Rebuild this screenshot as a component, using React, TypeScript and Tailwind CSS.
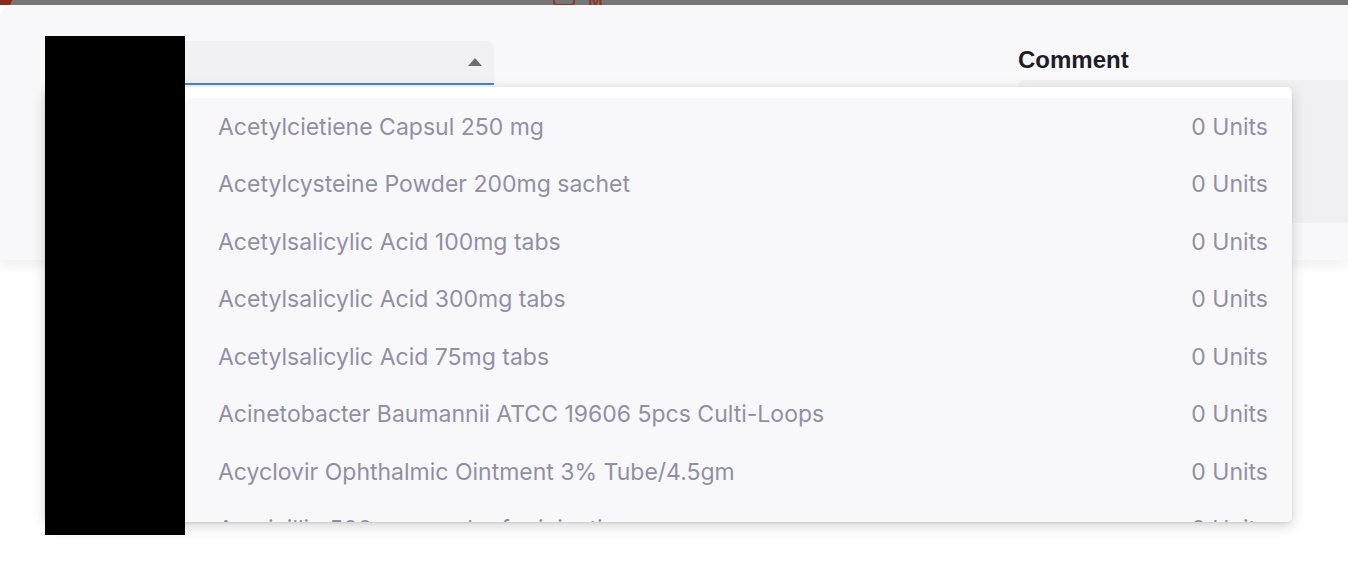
import React from 'react';

const items = [
  'Acetylcietiene Capsul 250 mg',
  'Acetylcysteine Powder 200mg sachet',
  'Acetylsalicylic Acid 100mg tabs',
  'Acetylsalicylic Acid 300mg tabs',
  'Acetylsalicylic Acid 75mg tabs',
  'Acinetobacter Baumannii ATCC 19606 5pcs Culti-Loops',
  'Acyclovir Ophthalmic Ointment 3% Tube/4.5gm',
  'Ampicillin 500mg powder for injection',
];

function Backdrop() {
  return (
    <div className="relative h-[5px] overflow-hidden bg-[#767676]">
      <div className="absolute left-[-6px] top-[-10px] h-[18px] w-[18px] rounded-full bg-[#8a2b1b]" />
      <div className="absolute left-[553px] top-[-12px] h-[18px] w-[22px] rounded-[4px] border-2 border-[#8a3a2c]" />
      <div className="absolute left-[588px] top-[-8px] font-['Liberation_Sans',sans-serif] text-[18px] font-bold leading-none text-[#8a3a2c]">M</div>
    </div>
  );
}

function Dropdown() {
  return (
    <div className="absolute left-[45px] top-[87px] h-[435px] w-[1247px] overflow-hidden rounded-[5px] bg-white pt-[11px] shadow-[0_4px_14px_rgba(0,0,0,0.16),0_1px_3px_rgba(0,0,0,0.1)]">
      <div className="h-full bg-[#f8f8fa]">
        {items.map((name) => (
          <div key={name} className="flex h-[57.5px] items-center justify-between pl-[173px] pr-[24px] font-['Inter',sans-serif] text-[23px] text-[#918fa5]">
            <span>{name}</span>
            <span>0 Units</span>
          </div>
        ))}
      </div>
    </div>
  );
}

export default function App() {
  return (
    <div className="relative h-[578px] w-[1348px] overflow-hidden bg-white">
      <Backdrop />
      <div className="flex h-[255px] rounded-tl-[14px] bg-[#f8f8fa] shadow-[0_6px_12px_rgba(0,0,0,0.06)]">
        <div className="w-[1018px] pl-[45px] pt-[36px]">
          <div className="flex h-[44px] w-[449px] items-center justify-end rounded-t-[8px] border-b-2 border-[#4a7fd6] bg-[#f1f1f3] pr-[11px]">
            <svg width="16" height="9" viewBox="0 0 16 9">
              <path d="M8 0 L15 8 L1 8 Z" fill="#6e6e6e" />
            </svg>
          </div>
        </div>
        <div className="flex flex-1 flex-col pt-[42px]">
          <div className="font-['Liberation_Sans',sans-serif] text-[24px] font-bold leading-[26px] text-[#1d1d28]">Comment</div>
          <div className="mt-[7px] h-[143px] rounded-tl-[8px] bg-[#f0f0f2]" />
        </div>
      </div>
      <Dropdown />
      <div className="absolute left-[45px] top-[36px] h-[499px] w-[140px] bg-black" />
    </div>
  );
}
